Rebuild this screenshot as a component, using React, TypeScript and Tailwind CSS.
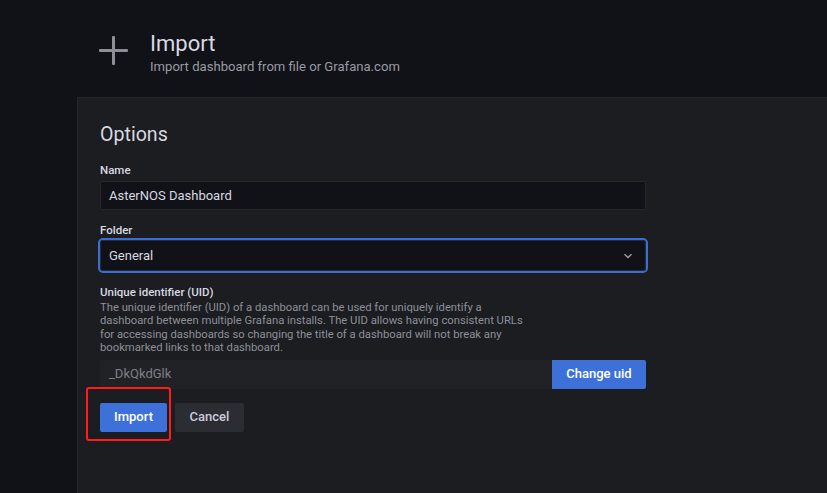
import React from "react";

export default function App() {
  return (
    <div
      className="w-[827px] h-[493px] overflow-hidden bg-[#111217] flex flex-col text-[#ccccdc]"
      style={{ fontFamily: "Roboto, 'Liberation Sans', sans-serif" }}
    >
      {/* Header */}
      <div className="h-[97px] shrink-0 flex items-start pl-[99px] pt-[31px]">
        <svg width="29" height="29" viewBox="0 0 29 29" className="mt-[5px] shrink-0">
          <rect x="13" y="0" width="3" height="29" rx="1" fill="#8e8e96" />
          <rect x="0" y="13" width="29" height="3" rx="1" fill="#8e8e96" />
        </svg>
        <div className="ml-[22px] flex flex-col">
          <div className="text-[22px] leading-[26px] text-[#d8d9e0]">Import</div>
          <div className="mt-[1px] text-[13.1px] leading-[18px] text-[#9a9ba3]">
            Import dashboard from file or Grafana.com
          </div>
        </div>
      </div>

      {/* Panel */}
      <div className="ml-[77px] flex-1 bg-[#1b1d21] border-t border-l border-[#24262a] pl-[22px] pt-[25px]">
        <div className="text-[19.6px] leading-[24px] text-[#d8d9e0]">Options</div>

        <div className="mt-[16px] text-[11.5px] leading-[15px] font-medium text-[#d8d9e0]">Name</div>
        <div className="mt-[3px] w-[546px] h-[29px] bg-[#111217] border border-[#26282d] rounded-[2px] flex items-center pl-[8px] text-[13px] text-[#d8d9e0]">
          AsterNOS Dashboard
        </div>

        <div className="mt-[13px] text-[11.5px] leading-[15px] font-medium text-[#d8d9e0]">Folder</div>
        <div className="-ml-[2px] w-[550px] h-[35px] rounded-[5px] border-2 border-[#3a6ed6] p-0">
          <div className="w-full h-full bg-[#111217] border border-[#2a2c31] rounded-[3px] flex items-center justify-between pl-[8px] pr-[12px] text-[13px] text-[#d8d9e0]">
            <span>General</span>
            <svg width="10" height="6" viewBox="0 0 10 6">
              <path d="M1.5 1.2 L5 4.5 L8.5 1.2" stroke="#9a9ba3" strokeWidth="1.4" fill="none" />
            </svg>
          </div>
        </div>

        <div className="mt-[12px] text-[11.5px] leading-[15px] font-medium text-[#d8d9e0]">
          Unique identifier (UID)
        </div>
        <div className="mt-[1px] text-[11.25px] leading-[13.4px] text-[#8e8f98]">
          The unique identifier (UID) of a dashboard can be used for uniquely identify a
          <br />
          dashboard between multiple Grafana installs. The UID allows having consistent URLs
          <br />
          for accessing dashboards so changing the title of a dashboard will not break any
          <br />
          bookmarked links to that dashboard.
        </div>

        <div className="mt-[5px] flex w-[546px] h-[29px]">
          <div className="flex-1 bg-[#212226] rounded-l-[2px] flex items-center pl-[9px] text-[13px] text-[#7e7f86]">
            _DkQkdGlk
          </div>
          <div className="w-[94px] bg-[#3d71d9] rounded-r-[2px] flex items-center justify-center text-[13px] font-medium text-white">
            Change uid
          </div>
        </div>

        <div className="mt-[14px] flex gap-[8px]">
          <div className="relative">
            <div className="w-[67px] h-[29px] bg-[#3d71d9] rounded-[2px] flex items-center justify-center text-[13px] font-medium text-white">
              Import
            </div>
            <div className="absolute left-[-14px] top-[-16px] w-[85px] h-[54px] border-2 border-[#ff1c1c] rounded-[3px]" />
          </div>
          <div className="w-[69px] h-[29px] bg-[#2b2d32] rounded-[2px] flex items-center justify-center text-[13px] font-medium text-[#ccccdc]">
            Cancel
          </div>
        </div>
      </div>
    </div>
  );
}
